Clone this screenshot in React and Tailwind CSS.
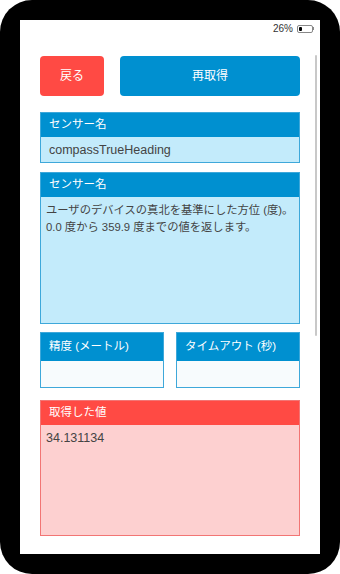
import React from 'react';

const font = { fontFamily: '"Liberation Sans", "Noto Sans CJK JP", sans-serif' };

const Panel = ({ title, children, bodyClass, headerClass = 'h-[24px]', red = false }) => (
  <div className={`flex flex-col border ${red ? 'border-[#f27574]' : 'border-[#3ea8da]'}`}>
    <div className={`${headerClass} flex items-center px-[8px] text-[11.5px] text-white ${red ? 'bg-[#ff4a44]' : 'bg-[#0090d0]'}`}>
      {title}
    </div>
    <div className={bodyClass}>{children}</div>
  </div>
);

export default function App() {
  return (
    <div className="w-[340px] h-[574px] bg-white" style={font}>
      <div className="w-full h-full bg-black rounded-[32px] p-[20px]">
        <div className="relative w-full h-full bg-white flex flex-col">
          {/* status bar */}
          <div className="h-[17px] flex items-center justify-end pr-[6px] gap-[4px]">
            <span className="text-[10px] text-[#333]">26%</span>
            <div className="flex items-center">
              <div className="w-[16px] h-[8px] border border-[#888] rounded-[2px] p-[1px]">
                <div className="w-[3px] h-full bg-black rounded-[1px]" />
              </div>
              <div className="w-[1px] h-[3px] bg-[#888]" />
            </div>
          </div>

          {/* scrollbar */}
          <div className="absolute right-[3px] top-[35px] w-[2px] h-[281px] bg-[#c8c8c8] rounded-full" />

          <div className="flex flex-col px-[20px] pt-[19px]">
            {/* buttons */}
            <div className="flex gap-[16px] h-[40px]">
              <button className="w-[64px] rounded-[4px] bg-[#ff4a44] text-white text-[12px]">戻る</button>
              <button className="flex-1 rounded-[4px] bg-[#0090d0] text-white text-[12px]">再取得</button>
            </div>

            <div className="mt-[16px]">
              <Panel title="センサー名" bodyClass="h-[25px] bg-[#c3ebfb] flex items-center px-[8px] pt-[2px] text-[12.5px] text-[#444]">
                compassTrueHeading
              </Panel>
            </div>

            <div className="mt-[9px]">
              <Panel title="センサー名" bodyClass="h-[126px] bg-[#c3ebfb] px-[5px] pt-[5px] text-[11.3px] leading-[17px] text-[#444]">
                <p>ユーザのデバイスの真北を基準にした方位 (度)。</p>
                <p>0.0 度から 359.9 度までの値を返します。</p>
              </Panel>
            </div>

            <div className="mt-[8px] grid grid-cols-2 gap-[12px]">
              <Panel title="精度 (メートル)" headerClass="h-[28px]" bodyClass="h-[26px] bg-[#f7fbfd]" />
              <Panel title="タイムアウト (秒)" headerClass="h-[28px]" bodyClass="h-[26px] bg-[#f7fbfd]" />
            </div>

            <div className="mt-[12px]">
              <Panel red title="取得した値" bodyClass="h-[110px] bg-[#fdd0d0] px-[5px] pt-[5px] text-[12.5px] leading-[17px] text-[#444]">
                34.131134
              </Panel>
            </div>
          </div>
        </div>
      </div>
    </div>
  );
}
